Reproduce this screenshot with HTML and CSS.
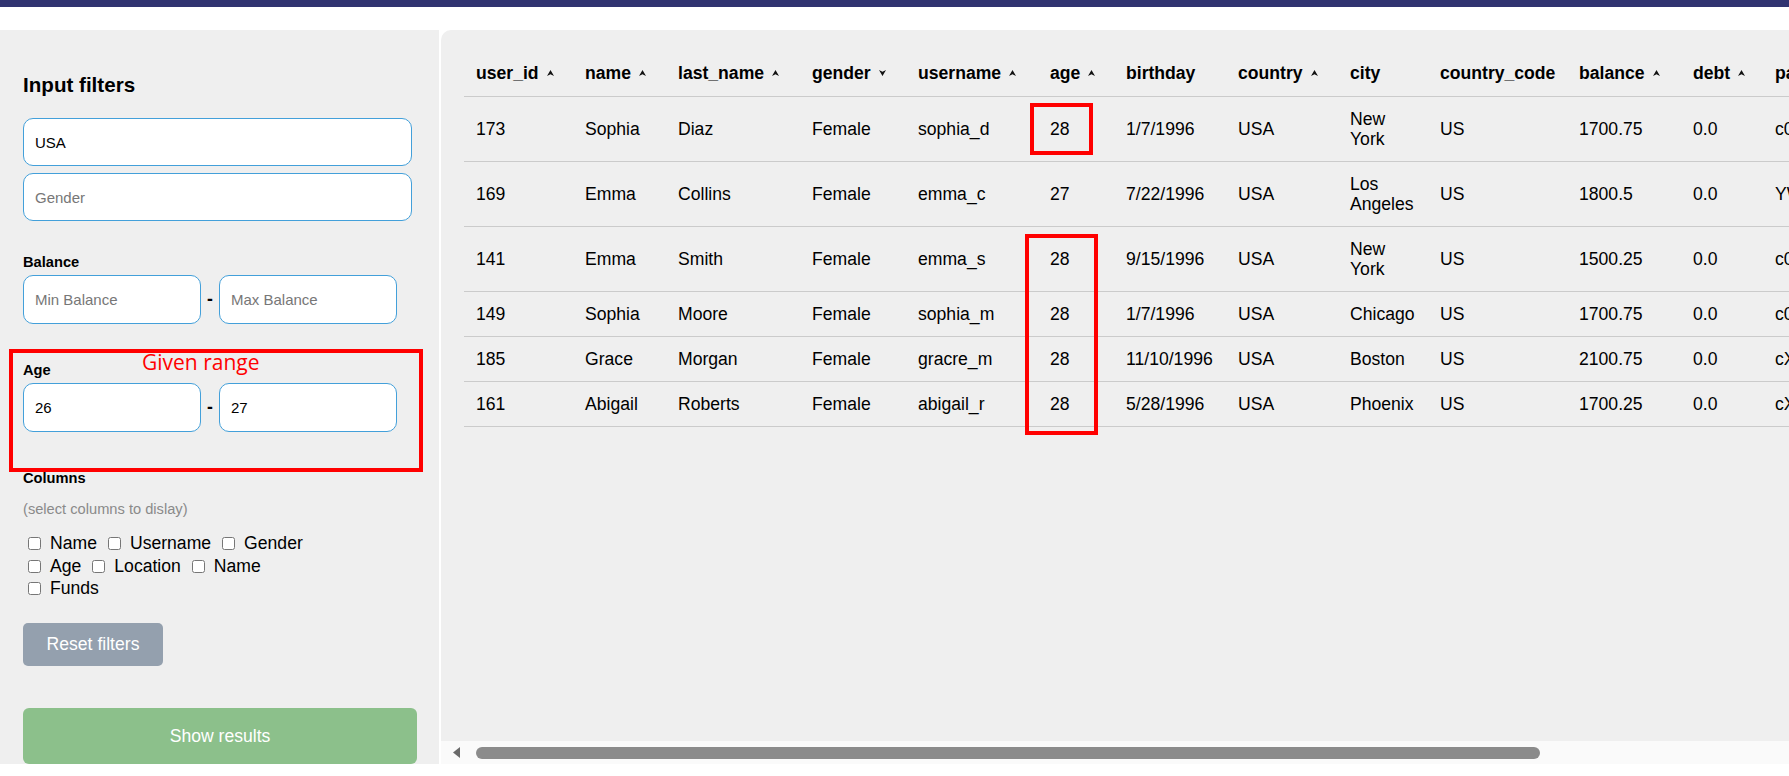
FILE: index.html
```html
<!DOCTYPE html>
<html lang="en">
<head>
<meta charset="utf-8">
<title>Users</title>
<link rel="stylesheet" href="styles.css">
</head>
<body>
<div class="topbar"></div>
<div class="page">
  <aside class="filters">
    <h3 class="filters-title">Input filters</h3>
    <input class="field field-wide field-first" type="text" value="USA">
    <input class="field field-wide" type="text" placeholder="Gender">

    <div class="group">
      <div class="group-label">Balance</div>
      <div class="range">
        <input class="field field-half" type="text" placeholder="Min Balance">
        <span class="range-sep">-</span>
        <input class="field field-half" type="text" placeholder="Max Balance">
      </div>
    </div>

    <div class="group group-age">
      <div class="group-label">Age</div>
      <div class="range">
        <input class="field field-half" type="text" value="26">
        <span class="range-sep">-</span>
        <input class="field field-half" type="text" value="27">
      </div>
    </div>

    <div class="group group-columns">
      <div class="group-label">Columns</div>
      <div class="hint">(select columns to dislay)</div>
      <div class="options">
        <label class="opt"><input type="checkbox">Name</label><label class="opt"><input type="checkbox">Username</label><label class="opt"><input type="checkbox">Gender</label><label class="opt"><input type="checkbox">Age</label><label class="opt"><input type="checkbox">Location</label><label class="opt"><input type="checkbox">Name</label><label class="opt"><input type="checkbox">Funds</label>
      </div>
    </div>

    <button class="btn btn-reset" type="button">Reset filters</button>
    <button class="btn btn-show" type="button">Show results</button>

    <div class="annot annot-range"><span class="annot-text">Given range</span></div>
  </aside>

  <main class="results">
    <div class="table-viewport">
      <table class="users">
        <colgroup>
          <col class="c-id"><col class="c-name"><col class="c-last"><col class="c-gender"><col class="c-user"><col class="c-age"><col class="c-bday"><col class="c-country"><col class="c-city"><col class="c-code"><col class="c-bal"><col class="c-debt"><col class="c-pass">
        </colgroup>
        <thead>
          <tr>
            <th>user_id<svg class="sort" viewBox="0 0 7 6"><path d="M0 6 3.5 0 7 6 3.5 4.2Z"/></svg></th>
            <th>name<svg class="sort" viewBox="0 0 7 6"><path d="M0 6 3.5 0 7 6 3.5 4.2Z"/></svg></th>
            <th>last_name<svg class="sort" viewBox="0 0 7 6"><path d="M0 6 3.5 0 7 6 3.5 4.2Z"/></svg></th>
            <th>gender<svg class="sort" viewBox="0 0 7 6"><path d="M0 0 3.5 6 7 0 3.5 1.8Z"/></svg></th>
            <th>username<svg class="sort" viewBox="0 0 7 6"><path d="M0 6 3.5 0 7 6 3.5 4.2Z"/></svg></th>
            <th>age<svg class="sort" viewBox="0 0 7 6"><path d="M0 6 3.5 0 7 6 3.5 4.2Z"/></svg></th>
            <th>birthday</th>
            <th>country<svg class="sort" viewBox="0 0 7 6"><path d="M0 6 3.5 0 7 6 3.5 4.2Z"/></svg></th>
            <th>city</th>
            <th>country_code</th>
            <th>balance<svg class="sort" viewBox="0 0 7 6"><path d="M0 6 3.5 0 7 6 3.5 4.2Z"/></svg></th>
            <th>debt<svg class="sort" viewBox="0 0 7 6"><path d="M0 6 3.5 0 7 6 3.5 4.2Z"/></svg></th>
            <th>password</th>
          </tr>
        </thead>
        <tbody>
          <tr><td>173</td><td>Sophia</td><td>Diaz</td><td>Female</td><td>sophia_d</td><td>28</td><td>1/7/1996</td><td>USA</td><td class="city">New York</td><td>US</td><td>1700.75</td><td>0.0</td><td>c0aGlhX3Bhc3M=</td></tr>
          <tr><td>169</td><td>Emma</td><td>Collins</td><td>Female</td><td>emma_c</td><td>27</td><td>7/22/1996</td><td>USA</td><td class="city">Los Angeles</td><td>US</td><td>1800.5</td><td>0.0</td><td>YWRtaW4xMjM=</td></tr>
          <tr><td>141</td><td>Emma</td><td>Smith</td><td>Female</td><td>emma_s</td><td>28</td><td>9/15/1996</td><td>USA</td><td class="city">New York</td><td>US</td><td>1500.25</td><td>0.0</td><td>c0VjcmV0MTIz</td></tr>
          <tr><td>149</td><td>Sophia</td><td>Moore</td><td>Female</td><td>sophia_m</td><td>28</td><td>1/7/1996</td><td>USA</td><td class="city">Chicago</td><td>US</td><td>1700.75</td><td>0.0</td><td>c0FzdzByZA==</td></tr>
          <tr><td>185</td><td>Grace</td><td>Morgan</td><td>Female</td><td>gracre_m</td><td>28</td><td>11/10/1996</td><td>USA</td><td class="city">Boston</td><td>US</td><td>2100.75</td><td>0.0</td><td>cXdlcnR5MTIz</td></tr>
          <tr><td>161</td><td>Abigail</td><td>Roberts</td><td>Female</td><td>abigail_r</td><td>28</td><td>5/28/1996</td><td>USA</td><td class="city">Phoenix</td><td>US</td><td>1700.25</td><td>0.0</td><td>cXdlcnR5NDU2</td></tr>
        </tbody>
      </table>
      <div class="annot annot-cell"></div>
      <div class="annot annot-column"></div>
    </div>
    <div class="hscroll">
      <svg class="hscroll-arrow" viewBox="0 0 7 11"><path d="M7 0 0 5.5 7 11Z"/></svg>
      <div class="hscroll-thumb"></div>
    </div>
  </main>
</div>
</body>
</html>
```

FILE: styles.css
```css
* {
  box-sizing: border-box;
}

html,
body {
  margin: 0;
  padding: 0;
  overflow: hidden;
  background: #ffffff;
}

body {
  width: 1789px;
  height: 776px;
  font-family: "Liberation Sans", Arial, sans-serif;
  font-size: 17.6px;
  color: #000;
}

.topbar {
  height: 7px;
  background: #303370;
}

.page {
  display: flex;
  gap: 2px;
  margin-top: 23px;
  height: 734px;
}

/* ---------- Filters panel ---------- */

.filters {
  position: relative;
  flex: 0 0 439px;
  background: #efefef;
  padding: 43px 22px 0 23px;
}

.filters-title {
  margin: 0 0 21px;
  font-size: 20.6px;
  line-height: 24px;
  font-weight: bold;
}

.field {
  display: block;
  height: 48px;
  padding: 0 11px;
  border: 1px solid #43a0da;
  border-radius: 10px;
  background: #fff;
  font-family: "Liberation Sans", Arial, sans-serif;
  font-size: 15px;
  color: #000;
  outline: none;
}

.field::placeholder {
  color: #777;
}

.field-wide {
  width: 389px;
}

.field-first {
  margin-bottom: 7px;
}

.field-half {
  width: 178px;
  height: 49px;
}

.group {
  margin-top: 33px;
}

.group-age,
.group-columns {
  margin-top: 38px;
}

.group-label {
  font-size: 14.67px;
  line-height: 17px;
  font-weight: bold;
  margin-bottom: 4px;
}

.range {
  display: flex;
  align-items: center;
  gap: 6px;
}

.range-sep {
  width: 6px;
  font-weight: bold;
  font-size: 17.6px;
  text-align: center;
}

.hint {
  margin-top: 14px;
  font-size: 14.67px;
  line-height: 17px;
  color: #8a8a8a;
}

.options {
  display: flex;
  flex-wrap: wrap;
  width: 320px;
  margin-top: 14px;
}

.opt {
  display: inline-flex;
  align-items: center;
  height: 22.7px;
  margin-right: 6px;
  font-size: 17.6px;
}

.opt input {
  width: 13px;
  height: 13px;
  margin: 0 9px 0 5px;
}

.btn {
  display: block;
  border: 0;
  color: #fff;
  font-family: "Liberation Sans", Arial, sans-serif;
  font-size: 17.6px;
}

.btn-reset {
  margin-top: 23px;
  width: 140px;
  height: 43px;
  border-radius: 5px;
  background: #94a0ae;
}

.btn-show {
  margin-top: 42px;
  width: 394px;
  height: 56px;
  border-radius: 6px;
  background: #8cc08b;
}

/* ---------- Annotations (overlay) ---------- */

.annot {
  position: absolute;
  border: 4px solid #ff0000;
}

.annot-range {
  left: 9px;
  top: 319px;
  width: 414px;
  height: 123px;
}

.annot-text {
  position: absolute;
  left: 129px;
  top: -5px;
  font-family: "Open Sans", sans-serif;
  font-size: 21px;
  color: #ff0000;
  white-space: nowrap;
}

.annot-cell {
  left: 589px;
  top: 73px;
  width: 63px;
  height: 52px;
}

.annot-column {
  left: 584px;
  top: 204px;
  width: 73px;
  height: 201px;
}

/* ---------- Results panel ---------- */

.results {
  flex: 0 0 1500px;
  display: flex;
  flex-direction: column;
  background: #efefef;
  border-top-left-radius: 10px;
  overflow: hidden;
}

.table-viewport {
  position: relative;
  flex: 1;
  padding: 21px 0 0 23px;
  overflow: hidden;
}

.users {
  table-layout: fixed;
  width: 1449px;
  border-collapse: collapse;
}

.c-id { width: 109px; }
.c-name { width: 93px; }
.c-last { width: 134px; }
.c-gender { width: 106px; }
.c-user { width: 132px; }
.c-age { width: 76px; }
.c-bday { width: 112px; }
.c-country { width: 112px; }
.c-city { width: 90px; }
.c-code { width: 139px; }
.c-bal { width: 114px; }
.c-debt { width: 82px; }
.c-pass { width: 150px; }

.users th,
.users td {
  height: 45px;
  padding: 12px;
  text-align: left;
  vertical-align: middle;
  border-bottom: 1px solid #cbcbcb;
  white-space: nowrap;
  line-height: 20px;
}

.users th {
  font-weight: bold;
}

.users td.city {
  white-space: normal;
}

.sort {
  width: 7px;
  height: 6px;
  margin-left: 8px;
  vertical-align: 3px;
  fill: #111;
}

.hscroll {
  height: 23px;
  flex: 0 0 23px;
  display: flex;
  align-items: center;
  padding-left: 12px;
  background: #fafafa;
}

.hscroll-arrow {
  width: 7px;
  height: 11px;
  fill: #6a6a6a;
}

.hscroll-thumb {
  margin-left: 16px;
  width: 1064px;
  height: 12px;
  border-radius: 6px;
  background: #8b8b8b;
}
```
